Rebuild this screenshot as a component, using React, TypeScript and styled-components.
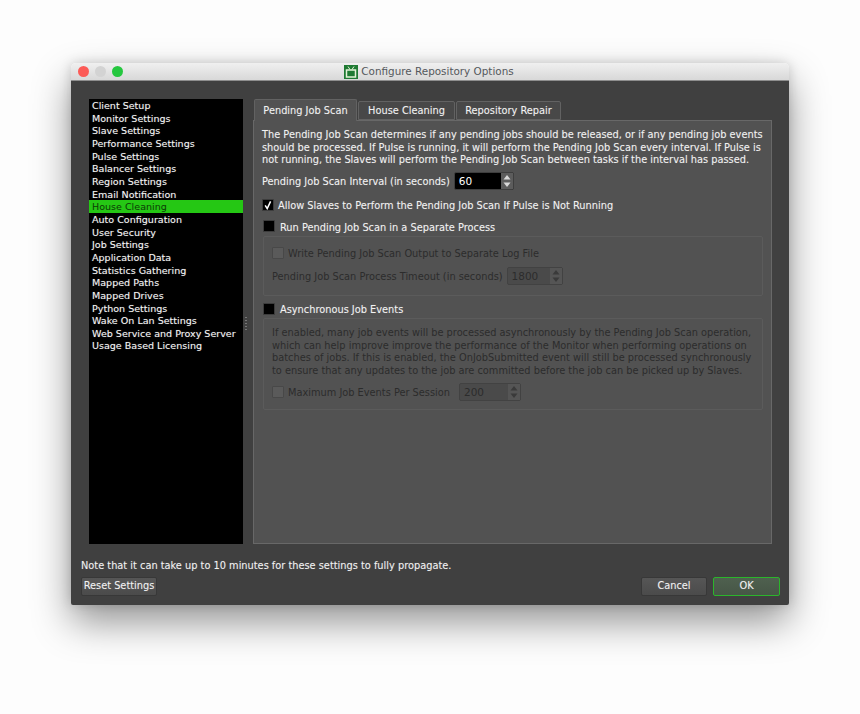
import React from "react";
import styled, { createGlobalStyle } from "styled-components";

const settingsPages = [
  "Client Setup",
  "Monitor Settings",
  "Slave Settings",
  "Performance Settings",
  "Pulse Settings",
  "Balancer Settings",
  "Region Settings",
  "Email Notification",
  "House Cleaning",
  "Auto Configuration",
  "User Security",
  "Job Settings",
  "Application Data",
  "Statistics Gathering",
  "Mapped Paths",
  "Mapped Drives",
  "Python Settings",
  "Wake On Lan Settings",
  "Web Service and Proxy Server",
  "Usage Based Licensing",
];

const Spinner: React.FC<{ value: string; width: number; disabled?: boolean }> = ({ value, width, disabled }) => (
  <SpinBox $width={width} $disabled={disabled}>
    <SpinValue $disabled={disabled}>{value}</SpinValue>
    <SpinArrows $disabled={disabled}>
      <svg width="8" height="14" viewBox="0 0 8 14">
        <path d="M4 1 L7.5 5.5 H0.5 Z" fill="currentColor" />
        <path d="M4 13 L7.5 8.5 H0.5 Z" fill="currentColor" />
      </svg>
    </SpinArrows>
  </SpinBox>
);

const App: React.FC = () => {
  return (
    <>
      <GlobalStyle />
      <Page>
        <Window>
          <TitleBar>
            <Lights>
              <Light $color="#fc5b57" />
              <Light $color="#d3d3d3" />
              <Light $color="#25c73f" />
            </Lights>
            <AppIcon viewBox="0 0 14 14">
              <rect width="14" height="14" fill="#1f7a33" />
              <rect x="2.5" y="5" width="9" height="7" fill="none" stroke="#e4f3d8" strokeWidth="1.5" />
              <path d="M4 1.5 L6 4.5 M10 1.5 L8 4.5" stroke="#e4f3d8" strokeWidth="1" />
            </AppIcon>
            <TitleText>Configure Repository Options</TitleText>
          </TitleBar>
          <Body>
            <Main>
              <PageList>
                {settingsPages.map((name) => (
                  <PageItem key={name} $active={name === "House Cleaning"}>
                    {name}
                  </PageItem>
                ))}
              </PageList>
              <Splitter />
              <TabArea>
                <TabRow>
                  <Tab $active $width={103}>Pending Job Scan</Tab>
                  <Tab $width={97}>House Cleaning</Tab>
                  <Tab $width={105}>Repository Repair</Tab>
                </TabRow>
                <Panel>
                  <Description>
                    The Pending Job Scan determines if any pending jobs should be released, or if any pending job events
                    <br />
                    should be processed. If Pulse is running, it will perform the Pending Job Scan every interval. If Pulse is
                    <br />
                    not running, the Slaves will perform the Pending Job Scan between tasks if the interval has passed.
                  </Description>
                  <IntervalRow>
                    <Label>Pending Job Scan Interval (in seconds)</Label>
                    <Spinner value="60" width={60} />
                  </IntervalRow>
                  <AllowRow>
                    <Check $checked>
                      <svg width="10" height="10" viewBox="0 0 10 10">
                        <path d="M2.2 5.4 L4.2 8.6 L7.6 1.4" fill="none" stroke="#fff" strokeWidth="1.5" />
                      </svg>
                    </Check>
                    <Label>Allow Slaves to Perform the Pending Job Scan If Pulse is Not Running</Label>
                  </AllowRow>
                  <GroupHeading>
                    <Check />
                    <RunLabel>Run Pending Job Scan in a Separate Process</RunLabel>
                  </GroupHeading>
                  <GroupBox $height={60}>
                    <GroupCheckRow>
                      <Check $disabled />
                      <DimLabel>Write Pending Job Scan Output to Separate Log File</DimLabel>
                    </GroupCheckRow>
                    <TimeoutRow>
                      <DimLabel>Pending Job Scan Process Timeout (in seconds)</DimLabel>
                      <Spinner value="1800" width={56} disabled />
                    </TimeoutRow>
                  </GroupBox>
                  <AsyncHeading>
                    <Check />
                    <Label>Asynchronous Job Events</Label>
                  </AsyncHeading>
                  <GroupBox $height={92}>
                    <DimText>
                      If enabled, many job events will be processed asynchronously by the Pending Job Scan operation,
                      <br />
                      which can help improve improve the performance of the Monitor when performing operations on
                      <br />
                      batches of jobs. If this is enabled, the OnJobSubmitted event will still be processed synchronously
                      <br />
                      to ensure that any updates to the job are committed before the job can be picked up by Slaves.
                    </DimText>
                    <MaxRow>
                      <Check $disabled />
                      <MaxLabel>Maximum Job Events Per Session</MaxLabel>
                      <Spinner value="200" width={62} disabled />
                    </MaxRow>
                  </GroupBox>
                </Panel>
              </TabArea>
            </Main>
            <Note>Note that it can take up to 10 minutes for these settings to fully propagate.</Note>
            <Footer>
              <Button $width={76}>Reset Settings</Button>
              <FooterRight>
                <Button $width={66}>Cancel</Button>
                <Button $width={67} $primary>OK</Button>
              </FooterRight>
            </Footer>
          </Body>
        </Window>
      </Page>
    </>
  );
};

export default App;

const GlobalStyle = createGlobalStyle`
  html, body {
    margin: 0;
    padding: 0;
    background: #fdfdfd;
  }
  * {
    box-sizing: border-box;
  }
`;

const Page = styled.div`
  width: 860px;
  height: 714px;
  padding: 63px 71px 0;
  overflow: hidden;
  font-family: "DejaVu Sans", Verdana, sans-serif;
  font-size: 9.8px;
  line-height: 12.66px;
  color: #f2f2f2;
  text-shadow: 0 0 1px rgba(255, 255, 255, 0.25);
`;

const Window = styled.div`
  width: 718px;
  height: 541px;
  border-radius: 5px 5px 2px 2px;
  box-shadow: 0 18px 38px rgba(0, 0, 0, 0.42), 0 0 12px rgba(0, 0, 0, 0.16);
  display: flex;
  flex-direction: column;
`;

const TitleBar = styled.div`
  position: relative;
  height: 18px;
  flex: none;
  display: flex;
  align-items: center;
  justify-content: center;
  gap: 3px;
  padding-right: 2px;
  border-radius: 5px 5px 0 0;
  background: linear-gradient(#f0f0f0, #d8d8d8);
  border-bottom: 1px solid #8e8e8e;
`;

const Lights = styled.div`
  position: absolute;
  left: 7px;
  top: 3px;
  display: flex;
  gap: 6px;
`;

const Light = styled.span<{ $color: string }>`
  width: 11px;
  height: 11px;
  border-radius: 50%;
  background: ${(p) => p.$color};
`;

const AppIcon = styled.svg`
  width: 14px;
  height: 14px;
  flex: none;
`;

const TitleText = styled.span`
  font-size: 10.4px;
  color: #54585c;
  text-shadow: none;
`;

const Body = styled.div`
  flex: 1;
  display: flex;
  flex-direction: column;
  background: #404040;
  padding: 18px 9px 9px 10px;
  border-radius: 0 0 2px 2px;
`;

const Main = styled.div`
  height: 445px;
  flex: none;
  display: flex;
  padding: 0 8px;
`;

const PageList = styled.div`
  width: 154px;
  flex: none;
  background: #000;
`;

const PageItem = styled.div<{ $active?: boolean }>`
  height: 12.66px;
  padding: 1px 0 0 3px;
  font-size: 9.55px;
  white-space: nowrap;
  color: ${(p) => (p.$active ? "#0b3a05" : "#f5f5f5")};
  background: ${(p) => (p.$active ? "#25c714" : "transparent")};
  text-shadow: 0 0 1px rgba(255, 255, 255, ${(p) => (p.$active ? 0 : 0.35)});
`;

const Splitter = styled.div`
  width: 10px;
  flex: none;
  position: relative;
  &::after {
    content: "";
    position: absolute;
    left: 2px;
    top: 218px;
    width: 2px;
    height: 13px;
    background: repeating-linear-gradient(#777 0 1px, transparent 1px 3px);
  }
`;

const TabArea = styled.div`
  flex: 1;
  display: flex;
  flex-direction: column;
  min-width: 0;
`;

const TabRow = styled.div`
  display: flex;
  align-items: flex-end;
  height: 21px;
  gap: 1px;
  padding-left: 1px;
  position: relative;
  z-index: 1;
`;

const Tab = styled.div<{ $active?: boolean; $width: number }>`
  width: ${(p) => p.$width}px;
  height: ${(p) => (p.$active ? 22 : 19)}px;
  margin-bottom: ${(p) => (p.$active ? -1 : 0)}px;
  padding-top: ${(p) => (p.$active ? 1 : 2)}px;
  display: flex;
  align-items: center;
  justify-content: center;
  white-space: nowrap;
  background: ${(p) => (p.$active ? "#525252" : "#484848")};
  border: 1px solid #626262;
  border-bottom: ${(p) => (p.$active ? "none" : "1px solid #626262")};
  border-radius: 2px 2px 0 0;
`;

const Panel = styled.div`
  flex: 1;
  background: #525252;
  border: 1px solid #686868;
  padding: 8px 8px 0;
`;

const Description = styled.div`
  white-space: nowrap;
`;

const Label = styled.span`
  white-space: nowrap;
  padding-top: 2px;
`;

const RunLabel = styled(Label)`
  padding-top: 4px;
`;

const DimLabel = styled.span`
  white-space: nowrap;
  padding-top: 2px;
  color: #2c2c2c;
  text-shadow: none;
`;

const MaxLabel = styled(DimLabel)`
  padding-top: 4px;
`;

const DimText = styled.div`
  color: #2c2c2c;
  white-space: nowrap;
  text-shadow: none;
`;

const IntervalRow = styled.div`
  display: flex;
  align-items: center;
  gap: 4px;
  margin-top: 5px;
  height: 18px;
`;

const SpinBox = styled.div<{ $width: number; $disabled?: boolean }>`
  width: ${(p) => p.$width}px;
  height: 18px;
  display: flex;
  flex: none;
  border: 1px solid ${(p) => (p.$disabled ? "#424242" : "#3e3e3e")};
  border-radius: 2px;
  background: ${(p) => (p.$disabled ? "#4a4a4a" : "#000")};
`;

const SpinValue = styled.div<{ $disabled?: boolean }>`
  flex: 1;
  padding-left: 4px;
  font-size: 10.5px;
  line-height: 16px;
  color: ${(p) => (p.$disabled ? "#2c2c2c" : "#fff")};
  text-shadow: none;
`;

const SpinArrows = styled.div<{ $disabled?: boolean }>`
  width: 12px;
  flex: none;
  display: flex;
  align-items: center;
  justify-content: center;
  background: ${(p) => (p.$disabled ? "#555" : "#5c5c5c")};
  color: ${(p) => (p.$disabled ? "#3a3a3a" : "#d8d8d8")};
`;

const AllowRow = styled.div`
  display: flex;
  align-items: center;
  gap: 4px;
  height: 14px;
  margin-top: 8px;
`;

const Check = styled.span<{ $checked?: boolean; $disabled?: boolean }>`
  width: 12px;
  height: 12px;
  flex: none;
  display: flex;
  align-items: center;
  justify-content: center;
  background: ${(p) => (p.$disabled ? "#5a5a5a" : "#000")};
  border: 1px solid ${(p) => (p.$disabled ? "#484848" : "#3c3c3c")};
  border-radius: 1px;
`;

const GroupHeading = styled.div`
  display: flex;
  align-items: center;
  gap: 5px;
  height: 14px;
  margin-top: 7px;
  padding-left: 1px;
  & + div {
    margin-top: 3px;
  }
`;

const AsyncHeading = styled(GroupHeading)`
  margin-top: 6px;
  & + div {
    margin-top: 2px;
  }
`;

const GroupBox = styled.div<{ $height: number }>`
  height: ${(p) => p.$height}px;
  margin-left: 1px;
  width: 500px;
  border: 1px solid #5b5b5b;
  border-radius: 2px;
  padding: 8px 8px 0;
`;

const GroupCheckRow = styled.div`
  display: flex;
  align-items: center;
  gap: 4px;
  height: 14px;
  margin-top: 1px;
`;

const TimeoutRow = styled.div`
  display: flex;
  align-items: center;
  gap: 4px;
  height: 18px;
  margin-top: 7px;
`;

const MaxRow = styled.div`
  display: flex;
  align-items: center;
  gap: 4px;
  height: 18px;
  margin-top: 5px;
  & > div {
    margin-left: 5px;
  }
`;

const Note = styled.div`
  margin-top: 16px;
  white-space: nowrap;
`;

const Footer = styled.div`
  margin-top: 4px;
  display: flex;
  justify-content: space-between;
  align-items: flex-start;
`;

const FooterRight = styled.div`
  display: flex;
  gap: 6px;
`;

const Button = styled.div<{ $width: number; $primary?: boolean }>`
  width: ${(p) => p.$width}px;
  height: 19px;
  display: flex;
  align-items: center;
  justify-content: center;
  white-space: nowrap;
  border-radius: 2px;
  background: ${(p) => (p.$primary ? "linear-gradient(#4f604f, #465646)" : "linear-gradient(#565656, #4b4b4b)")};
  border: 1px solid ${(p) => (p.$primary ? "#2bb52b" : "#383838")};
`;
